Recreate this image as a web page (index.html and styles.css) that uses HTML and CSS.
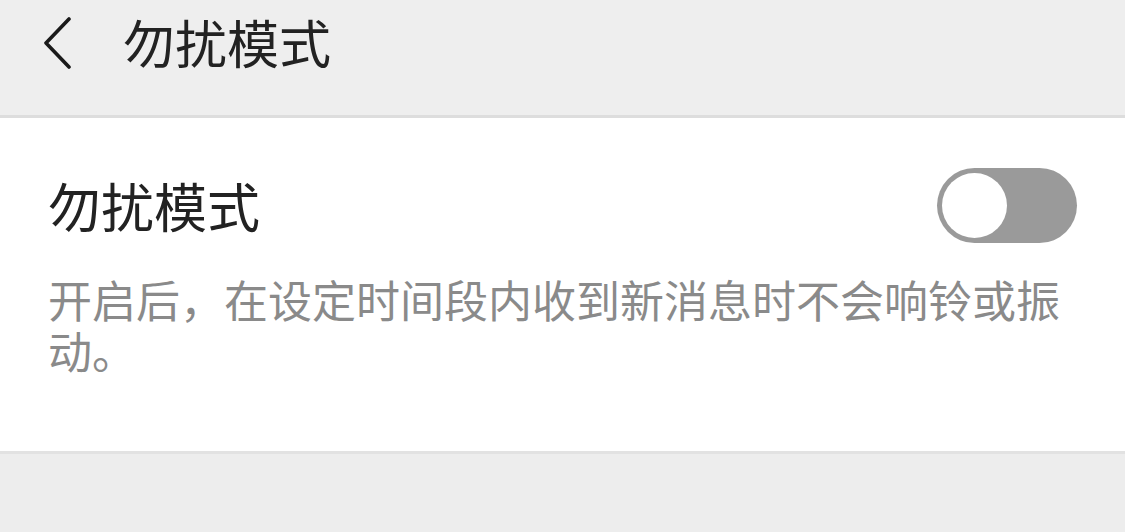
FILE: index.html
```html
<!DOCTYPE html>
<html lang="zh-CN">
<head>
<meta charset="utf-8">
<title>勿扰模式</title>
<link rel="stylesheet" href="styles.css">
</head>
<body>
<header class="topbar">
  <svg class="back" viewBox="0 0 30 52" width="30" height="52" aria-hidden="true">
    <polyline points="27,2 4,26 27,50" fill="none" stroke="#1a1a1a" stroke-width="3.6" stroke-linecap="round" stroke-linejoin="round"/>
  </svg>
  <h1 class="title">勿扰模式</h1>
</header>
<section class="card">
  <div class="row">
    <span class="row-label">勿扰模式</span>
    <span class="switch"><span class="knob"></span></span>
  </div>
  <p class="desc">开启后，在设定时间段内收到新消息时不会响铃或振动。</p>
</section>
<div class="rest"></div>
</body>
</html>
```

FILE: styles.css
```css
html, body {
  margin: 0;
  padding: 0;
  background: #ededed;
  font-family: "Noto Sans CJK SC", "Noto Sans", sans-serif;
}

.topbar {
  display: flex;
  align-items: flex-start;
  height: 99px;
  padding: 16px 0 0 42px;
  background: #eeeeee;
  border-bottom: 3px solid #dddddd;
}

.back {
  display: block;
  margin-top: 1px;
}

.title {
  margin: 0 0 0 51px;
  font-size: 52px;
  line-height: 52px;
  font-weight: 400;
  color: #222222;
}

.card {
  background: #ffffff;
  padding: 50px 48px 75px 48px;
  border-bottom: 3px solid #e2e2e2;
}

.row {
  display: flex;
  align-items: center;
  justify-content: space-between;
  height: 75px;
}

.row-label {
  font-size: 53px;
  line-height: 53px;
  color: #222222;
}

.switch {
  display: flex;
  align-items: center;
  box-sizing: border-box;
  width: 140px;
  height: 75px;
  padding: 0 5px;
  border-radius: 38px;
  background: #9a9a9a;
}

.knob {
  width: 65px;
  height: 65px;
  border-radius: 50%;
  background: #ffffff;
}

.desc {
  margin: 31px 0 0 0;
  font-size: 44px;
  line-height: 51px;
  color: #8a8a8a;
}

.rest {
  height: 80px;
  background: #ededed;
}
```
